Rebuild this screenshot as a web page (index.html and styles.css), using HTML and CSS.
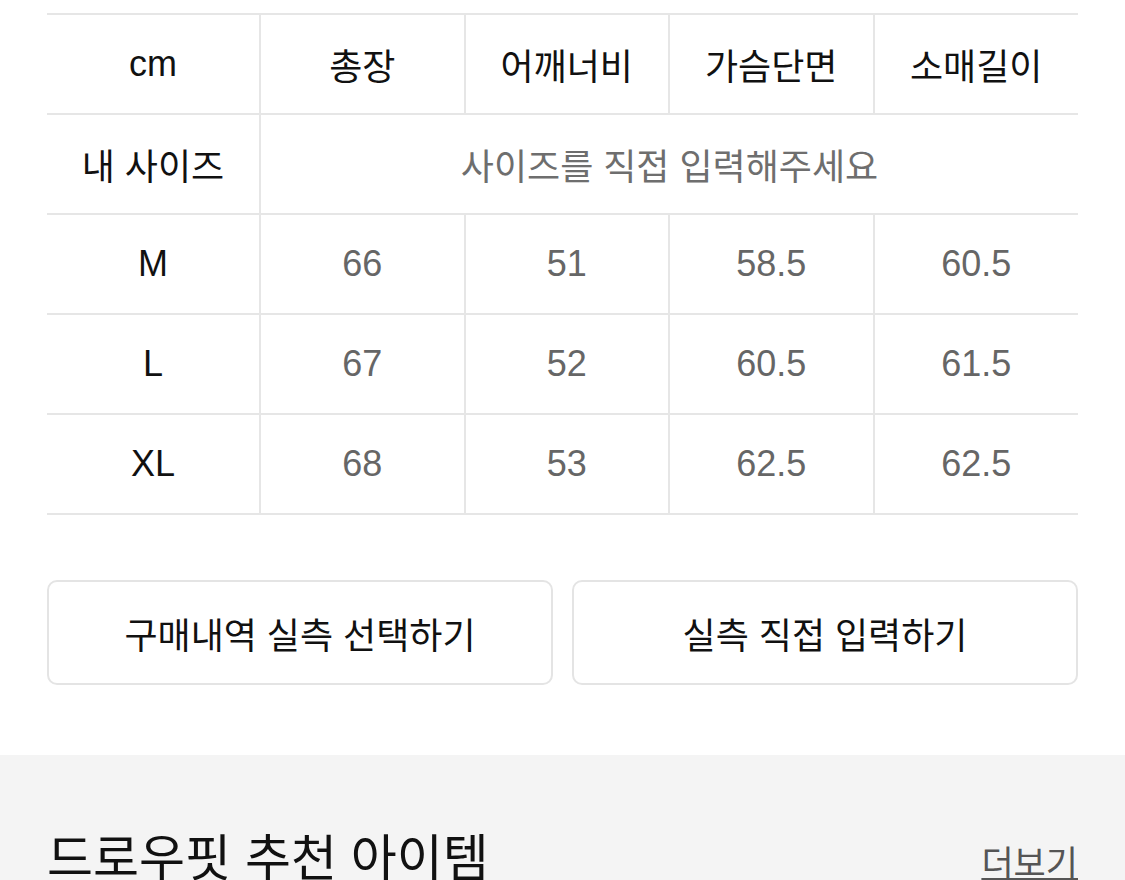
FILE: index.html
```html
<!DOCTYPE html>
<html lang="ko">
<head>
    <meta charset="UTF-8">
    <meta name="viewport" content="width=device-width, initial-scale=1.0">
    <title>실측 사이즈</title>
    <link rel="stylesheet" href="styles.css">
</head>
<body>
    <div class="size-section">
        <table class="size-table">
            <tr class="head">
                <th>cm</th>
                <th>총장</th>
                <th>어깨너비</th>
                <th>가슴단면</th>
                <th>소매길이</th>
            </tr>
            <tr>
                <th>내 사이즈</th>
                <td colspan="4" class="placeholder">사이즈를 직접 입력해주세요</td>
            </tr>
            <tr>
                <th>M</th>
                <td>66</td>
                <td>51</td>
                <td>58.5</td>
                <td>60.5</td>
            </tr>
            <tr>
                <th>L</th>
                <td>67</td>
                <td>52</td>
                <td>60.5</td>
                <td>61.5</td>
            </tr>
            <tr>
                <th>XL</th>
                <td>68</td>
                <td>53</td>
                <td>62.5</td>
                <td>62.5</td>
            </tr>
        </table>

        <div class="actions">
            <button class="action-btn">구매내역 실측 선택하기</button>
            <button class="action-btn">실측 직접 입력하기</button>
        </div>
    </div>

    <div class="recommend">
        <div class="recommend-head">
            <h2>드로우핏 추천 아이템</h2>
            <a href="#" class="more">더보기</a>
        </div>
    </div>
</body>
</html>
```

FILE: styles.css
```css
body {
    margin: 0;
    font-family: 'Liberation Sans', 'Noto Sans CJK KR', sans-serif;
    background-color: #fff;
    color: #111;
    overflow: hidden;
}

.size-section {
    padding: 13px 47px 70px;
}

.size-table {
    width: 100%;
    border-collapse: collapse;
    table-layout: fixed;
}

.size-table tr {
    height: 100px;
}

.size-table th,
.size-table td {
    border: 2px solid #e6e6e6;
    text-align: center;
    font-size: 36px;
    padding: 0;
}

.size-table th {
    font-weight: normal;
    color: #111;
}

.size-table th:first-child {
    width: 212px;
    border-left: none;
}

.size-table td:last-child,
.size-table th:last-child {
    border-right: none;
}

.size-table td {
    color: #666;
}

.size-table .placeholder {
    color: #6e6e6e;
}

.actions {
    display: flex;
    gap: 19px;
    margin-top: 65px;
}

.action-btn {
    flex: 1;
    height: 105px;
    background-color: #fff;
    border: 2px solid #e4e4e4;
    border-radius: 10px;
    font-family: inherit;
    font-size: 36px;
    color: #111;
    cursor: pointer;
}

.recommend {
    background-color: #f4f4f4;
    padding: 76px 47px 40px;
}

.recommend-head {
    display: flex;
    justify-content: space-between;
    align-items: baseline;
}

.recommend-head h2 {
    margin: 0;
    font-size: 50px;
    font-weight: normal;
    line-height: 56px;
    color: #111;
}

.more {
    font-size: 35px;
    line-height: 40px;
    color: #555;
    text-decoration: underline;
    text-underline-offset: 2px;
    text-decoration-thickness: 2px;
}
```
